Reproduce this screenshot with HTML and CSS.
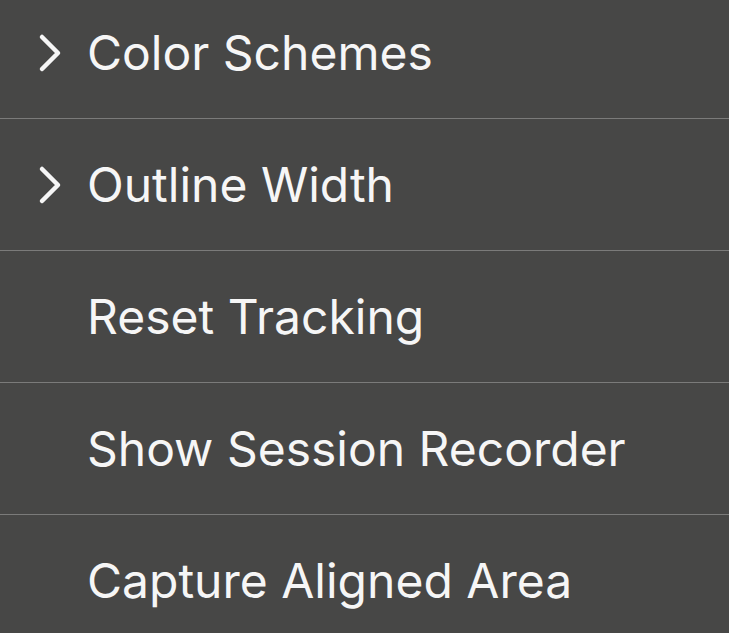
FILE: index.html
```html
<!DOCTYPE html>
<html lang="en">
<head>
    <meta charset="UTF-8">
    <meta name="viewport" content="width=device-width, initial-scale=1.0">
    <title>Menu</title>
    <link rel="stylesheet" href="styles.css">
</head>
<body>
    <ul class="menu">
        <li class="menu-item">
            <span class="chevron">
                <svg width="24" height="40" viewBox="0 0 24 40"><polyline points="4,4 20,20 4,36" fill="none" stroke="#f6f6f6" stroke-width="4.5" stroke-linecap="round" stroke-linejoin="round"/></svg>
            </span>
            <span class="label">Color Schemes</span>
        </li>
        <li class="menu-item">
            <span class="chevron">
                <svg width="24" height="40" viewBox="0 0 24 40"><polyline points="4,4 20,20 4,36" fill="none" stroke="#f6f6f6" stroke-width="4.5" stroke-linecap="round" stroke-linejoin="round"/></svg>
            </span>
            <span class="label">Outline Width</span>
        </li>
        <li class="menu-item">
            <span class="chevron"></span>
            <span class="label">Reset Tracking</span>
        </li>
        <li class="menu-item">
            <span class="chevron"></span>
            <span class="label">Show Session Recorder</span>
        </li>
        <li class="menu-item">
            <span class="chevron"></span>
            <span class="label">Capture Aligned Area</span>
        </li>
    </ul>
</body>
</html>
```

FILE: styles.css
```css
body {
    margin: 0;
    padding: 0;
    background-color: #474746;
    font-family: 'Inter', 'Roboto', sans-serif;
    color: #f6f6f6;
    overflow: hidden;
}

.menu {
    list-style: none;
    margin: -13px 0 0 0;
    padding: 0;
}

.menu-item {
    display: flex;
    align-items: center;
    height: 131px;
    border-bottom: 1px solid #7b7b7a;
    padding-left: 38px;
}

.chevron {
    width: 24px;
    height: 40px;
    margin-right: 25px;
    display: flex;
    align-items: center;
}

.label {
    font-size: 48px;
    font-weight: 400;
    letter-spacing: 0;
}
```
